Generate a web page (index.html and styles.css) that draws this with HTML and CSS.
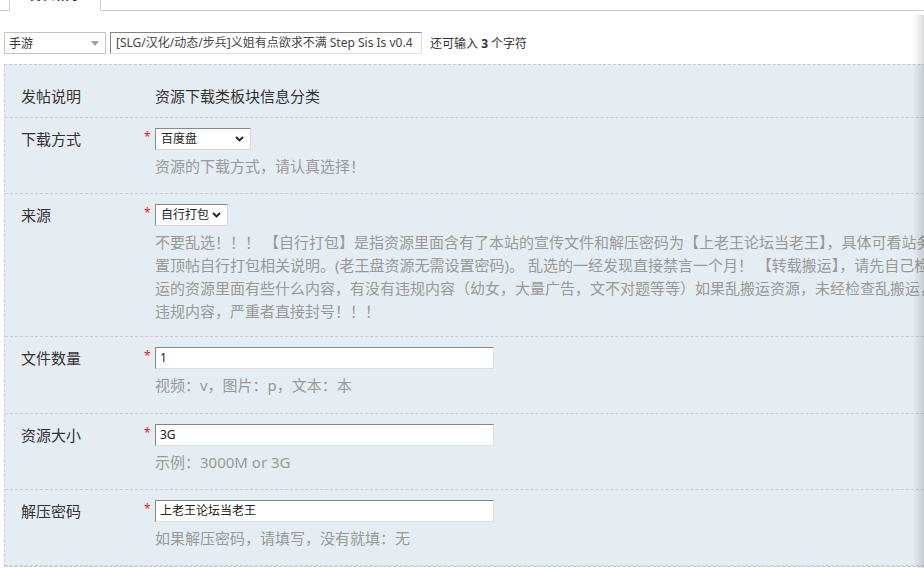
FILE: index.html
```html
<!DOCTYPE html>
<html lang="zh-CN">
<head>
<meta charset="utf-8">
<title>发表帖子</title>
<link rel="stylesheet" href="styles.css">
</head>
<body>
<div class="page">
  <div class="tabs"><div class="tab">发表帖子</div></div>

  <div class="titlebar">
    <div class="typesel"><span>手游</span><i class="tri"></i></div>
    <div class="title-input">[SLG/汉化/动态/步兵]义姐有点欲求不满 Step Sis Is v0.4</div>
    <span class="cnt">还可输入 <b>3</b> 个字符</span>
  </div>

  <div class="exfm">
    <div class="row row-first">
      <div class="lbl">发帖说明</div>
      <div class="fld">资源下载类板块信息分类</div>
    </div>

    <div class="row">
      <div class="lbl">下载方式</div>
      <div class="rq">*</div>
      <div class="fld">
        <div class="sel sel-w1"><span>百度盘</span><svg class="chev" width="9" height="6" viewBox="0 0 9 6"><path d="M1 1 L4.5 4.5 L8 1" fill="none" stroke="#222" stroke-width="1.9"/></svg></div>
        <div class="hint"><span class="ln">资源的下载方式，请认真选择！</span></div>
      </div>
    </div>

    <div class="row row-tight">
      <div class="lbl">来源</div>
      <div class="rq">*</div>
      <div class="fld">
        <div class="sel sel-w2"><span>自行打包</span><svg class="chev" width="9" height="6" viewBox="0 0 9 6"><path d="M1 1 L4.5 4.5 L8 1" fill="none" stroke="#222" stroke-width="1.9"/></svg></div>
        <div class="hint">
          <span class="ln">不要乱选！！！ 【自行打包】是指资源里面含有了本站的宣传文件和解压密码为【上老王论坛当老王】，具体可看站务区</span>
          <span class="ln">置顶帖自行打包相关说明。(老王盘资源无需设置密码)。 乱选的一经发现直接禁言一个月！ 【转载搬运】，请先自己检查一下搬</span>
          <span class="ln">运的资源里面有些什么内容，有没有违规内容（幼女，大量广告，文不对题等等）如果乱搬运资源，未经检查乱搬运，发现有</span>
          <span class="ln">违规内容，严重者直接封号！！！</span>
        </div>
      </div>
    </div>

    <div class="row row-loose">
      <div class="lbl">文件数量</div>
      <div class="rq">*</div>
      <div class="fld">
        <div class="px">1</div>
        <div class="hint"><span class="ln">视频：v，图片：p，文本：本</span></div>
      </div>
    </div>

    <div class="row">
      <div class="lbl">资源大小</div>
      <div class="rq">*</div>
      <div class="fld">
        <div class="px">3G</div>
        <div class="hint"><span class="ln">示例：3000M or 3G</span></div>
      </div>
    </div>

    <div class="row">
      <div class="lbl">解压密码</div>
      <div class="rq">*</div>
      <div class="fld">
        <div class="px">上老王论坛当老王</div>
        <div class="hint"><span class="ln">如果解压密码，请填写，没有就填：无</span></div>
      </div>
    </div>
  </div>
</div>
<div class="edge-shade"></div>
</body>
</html>
```

FILE: styles.css
```css
html, body {
  margin: 0;
  padding: 0;
  overflow: hidden;
  background: #fff;
}
body {
  font-family: "Noto Sans", "Noto Sans CJK SC", sans-serif;
  color: #333;
  font-size: 12px;
}
.page {
  width: 1200px;
}

/* tab strip */
.tabs {
  display: flow-root;
  height: 10px;
  border-bottom: 1px solid #cdcdcd;
}
.tab {
  margin-top: -21px;
  margin-left: 9px;
  width: 90px;
  box-sizing: content-box;
  border: 1px solid #cdcdcd;
  border-bottom: none;
  background: #fff;
  text-align: center;
  font-size: 14px;
  font-weight: bold;
  line-height: 16px;
  padding-top: 6px;
  height: 25px;
  color: #333;
}

/* title row */
.titlebar {
  display: flex;
  align-items: center;
  margin-top: 21px;
  height: 22px;
}
.typesel {
  margin-left: 4px;
  width: 102px;
  height: 22px;
  box-sizing: border-box;
  border: 1px solid #c4c4c4;
  background: #fff;
  display: flex;
  align-items: center;
  justify-content: space-between;
  padding: 0 6px 0 4px;
  font-size: 12px;
  color: #333;
}
.tri {
  width: 0;
  height: 0;
  border-left: 4px solid transparent;
  border-right: 4px solid transparent;
  border-top: 5px solid #a0a0a0;
}
.title-input {
  margin-left: 4px;
  width: 312px;
  height: 22px;
  box-sizing: border-box;
  border: 1px solid;
  border-color: #848484 #e0e0e0 #e0e0e0 #848484;
  background: #fff;
  padding: 0 5px;
  line-height: 20px;
  font-size: 12px;
  color: #444;
  white-space: nowrap;
  overflow: hidden;
}
.cnt {
  margin-left: 8px;
  font-size: 12px;
  color: #333;
}
.cnt b {
  font-weight: bold;
}

/* extra fields box */
.exfm {
  margin: 10px 0 0 4px;
  border: 1px dashed #c8cdd2;
  background: #e5edf2;
  padding-top: 10px;
}
.row {
  display: grid;
  grid-template-columns: 120px 14px 1fr;
  align-items: start;
  padding: 10px 0 15px 16px;
  border-bottom: 1px dashed #c8cdd2;
}
.row-first {
  padding-bottom: 10px;
}
.row-first .fld {
  grid-column: 3;
}
.row-tight {
  padding-bottom: 13px;
}
.row-loose {
  padding-bottom: 16px;
}
.lbl {
  font-size: 15px;
  line-height: 22px;
  color: #333;
}
.rq {
  font-size: 12px;
  line-height: 18px;
  color: #e8161b;
  padding-left: 3px;
}
.fld {
  font-size: 15px;
  line-height: 22px;
  color: #333;
}

.sel {
  display: flex;
  align-items: center;
  justify-content: space-between;
  height: 22px;
  box-sizing: border-box;
  border: 1px solid;
  border-color: #8a8a8a #d6d6d6 #d6d6d6 #8a8a8a;
  background: #fff;
  padding: 0 6px 0 5px;
  font-size: 12px;
  line-height: 20px;
  color: #222;
}
.sel-w1 { width: 96px; }
.sel-w2 { width: 73px; }
.chev { display: block; }

.px {
  width: 339px;
  height: 22px;
  box-sizing: border-box;
  border: 1px solid;
  border-color: #848484 #e0e0e0 #e0e0e0 #848484;
  background: #fff;
  padding: 0 4px;
  font-size: 12px;
  line-height: 20px;
  color: #222;
}

.hint {
  margin-top: 5px;
  color: #999;
  font-size: 15px;
  line-height: 23px;
}
.ln {
  display: block;
  white-space: nowrap;
}

.edge-shade {
  position: fixed;
  top: 15px;
  right: 0;
  bottom: 0;
  width: 11px;
  background: linear-gradient(to right, rgba(0,0,0,0), rgba(0,0,0,0.13));
}
```
